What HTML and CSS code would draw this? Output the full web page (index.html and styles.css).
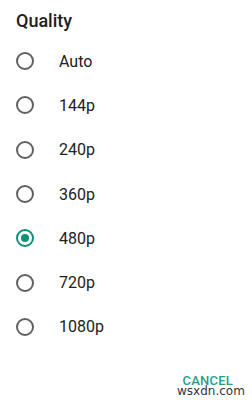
FILE: index.html
```html
<!DOCTYPE html>
<html lang="en">
<head>
    <meta charset="UTF-8">
    <title>Quality</title>
    <link rel="stylesheet" href="styles.css">
</head>
<body>
    <div class="dialog">
        <h1 class="title">Quality</h1>
        <ul class="options">
            <li class="option"><span class="radio"></span><span class="label">Auto</span></li>
            <li class="option"><span class="radio"></span><span class="label">144p</span></li>
            <li class="option"><span class="radio"></span><span class="label">240p</span></li>
            <li class="option"><span class="radio"></span><span class="label">360p</span></li>
            <li class="option"><span class="radio checked"></span><span class="label">480p</span></li>
            <li class="option"><span class="radio"></span><span class="label">720p</span></li>
            <li class="option"><span class="radio"></span><span class="label">1080p</span></li>
        </ul>
        <div class="actions">
            <span class="cancel">CANCEL</span>
        </div>
        <span class="watermark">wsxdn.com</span>
    </div>
</body>
</html>
```

FILE: styles.css
```css
body{
    margin: 0;
    background: #fff;
    font-family: Roboto, "Noto Sans", sans-serif;
}
.dialog{
    position: relative;
    width: 252px;
    height: 400px;
    overflow: hidden;
}
.title{
    margin: 0;
    padding: 10px 0 0 16px;
    font-size: 18px;
    font-weight: 500;
    color: #212121;
    line-height: 22px;
}
.options{
    list-style: none;
    margin: 0;
    padding: 7px 0 0 0;
}
.option{
    display: flex;
    align-items: center;
    height: 44.3px;
    padding-left: 16px;
}
.radio{
    box-sizing: border-box;
    width: 18px;
    height: 18px;
    border: 2px solid #616161;
    border-radius: 50%;
    display: flex;
    align-items: center;
    justify-content: center;
}
.radio.checked{
    border-color: #128f7c;
}
.radio.checked::after{
    content: "";
    width: 8px;
    height: 8px;
    border-radius: 50%;
    background: #128f7c;
}
.label{
    margin-left: 25px;
    font-size: 16px;
    color: #212121;
}
.actions{
    display: flex;
    justify-content: flex-end;
    padding: 24px 19px 0 0;
}
.cancel{
    font-size: 13px;
    font-weight: 500;
    line-height: 16px;
    color: #2a9d8a;
    letter-spacing: 0.2px;
}
.watermark{
    position: absolute;
    left: 177px;
    top: 384px;
    font-family: "DejaVu Sans", sans-serif;
    font-size: 12px;
    line-height: 14px;
    color: #333;
}
```
